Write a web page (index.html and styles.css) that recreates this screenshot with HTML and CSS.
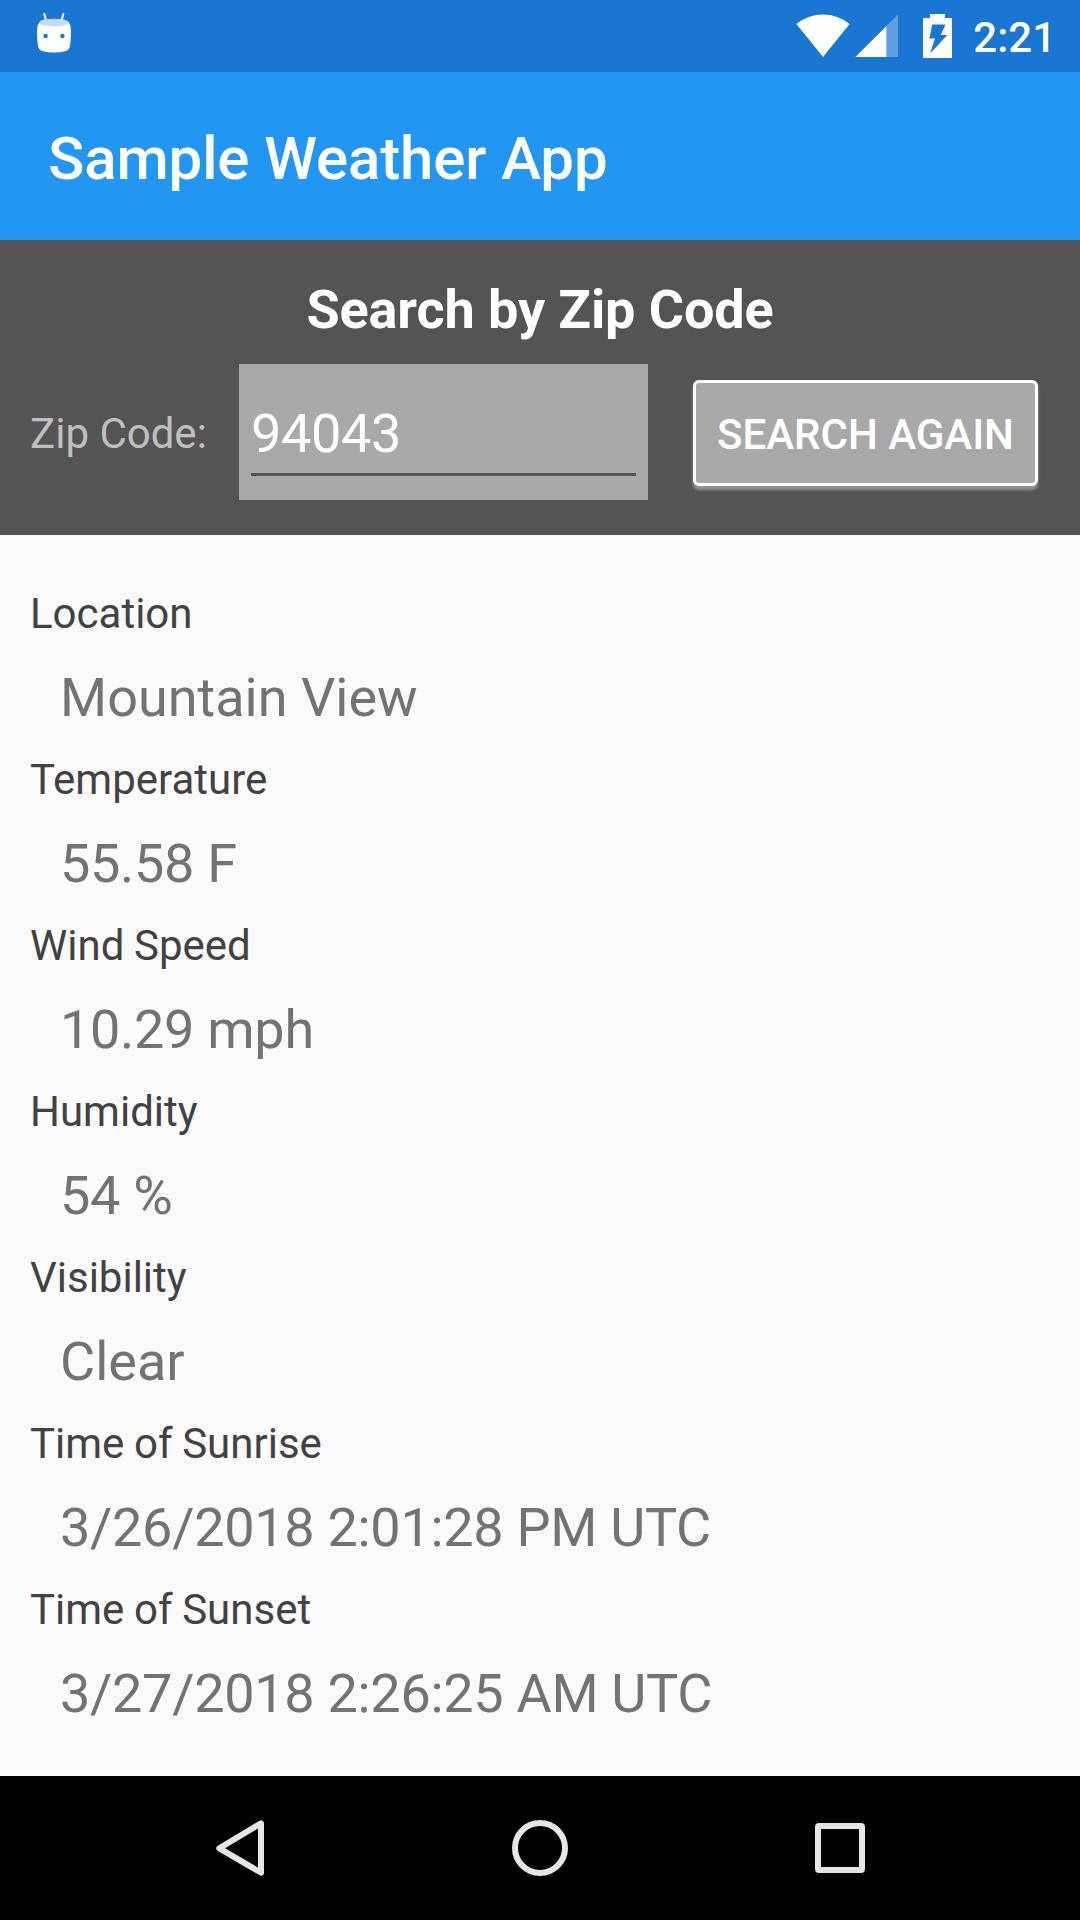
FILE: index.html
```html
<!DOCTYPE html>
<html lang="en">
<head>
<meta charset="utf-8">
<title>Sample Weather App</title>
<link rel="stylesheet" href="styles.css">
</head>
<body>
<div class="screen">
  <div class="status-bar">
    <svg class="robot-icon" width="36" height="42" viewBox="0 0 36 42">
      <path d="M8.3 2L10.4 10M27.3 2L25.2 10" stroke="#fff" stroke-width="2" stroke-linecap="round"/>
      <path d="M3.5 10.5Q18 16 32.5 10.5Q34 11.5 34.5 14Q35.6 24 34 34Q33.3 38 30 39Q18 42.2 6 39Q2.7 38 2 34Q.4 24 1.5 14Q2 11.5 3.5 10.5Z" fill="#fff"/>
      <ellipse cx="18" cy="10.6" rx="14.8" ry="3.9" fill="#c5daf3"/>
      <circle cx="9.6" cy="24" r="2.2" fill="#1976d2"/>
      <circle cx="26.4" cy="24" r="2.2" fill="#1976d2"/>
    </svg>
    <div class="status-right">
      <svg class="wifi-icon" width="54" height="44" viewBox="0 0 54 44">
        <path d="M27 43L.4 10Q12 .5 27 .5T53.6 10Z" fill="#fff"/>
      </svg>
      <svg class="signal-icon" width="43" height="44" viewBox="0 0 43 44">
        <path d="M43 .5V43H.5Z" fill="#fff" opacity=".3"/>
        <path d="M31.3 12.2V43H.5Z" fill="#fff"/>
      </svg>
      <svg class="battery-icon" width="29" height="44" viewBox="0 0 29 44">
        <path fill-rule="evenodd" d="M7 0H22V4H29V44H0V4H7ZM9.3 10.5H22.5L17.8 21H24.4L7 39.5L12 24.5H6.3Z" fill="#fff"/>
      </svg>
      <span class="clock">2:21</span>
    </div>
  </div>

  <header class="app-bar"><h1 class="app-title">Sample Weather App</h1></header>

  <section class="search">
    <h2 class="search-title">Search by Zip Code</h2>
    <div class="search-row">
      <label class="zip-label" for="zip">Zip Code:</label>
      <div class="zip-field"><input class="zip-input" id="zip" type="text" value="94043"></div>
      <button class="search-button">SEARCH AGAIN</button>
    </div>
  </section>

  <dl class="results">
    <dt class="label">Location</dt><dd class="value">Mountain View</dd>
    <dt class="label">Temperature</dt><dd class="value numeric">55.58 F</dd>
    <dt class="label">Wind Speed</dt><dd class="value numeric">10.29 mph</dd>
    <dt class="label">Humidity</dt><dd class="value numeric">54 %</dd>
    <dt class="label">Visibility</dt><dd class="value">Clear</dd>
    <dt class="label">Time of Sunrise</dt><dd class="value numeric">3/26/2018 2:01:28 PM UTC</dd>
    <dt class="label">Time of Sunset</dt><dd class="value numeric">3/27/2018 2:26:25 AM UTC</dd>
  </dl>

  <nav class="nav-bar">
    <div class="nav-item">
      <svg width="60" height="60" viewBox="0 0 60 60"><path d="M51 5.3V54.7L9.3 30.3Z" fill="none" stroke="#e6e6e6" stroke-width="6" stroke-linejoin="round"/></svg>
    </div>
    <div class="nav-item">
      <svg width="60" height="60" viewBox="0 0 60 60"><circle cx="30" cy="30" r="25" fill="none" stroke="#e6e6e6" stroke-width="6"/></svg>
    </div>
    <div class="nav-item">
      <svg width="60" height="60" viewBox="0 0 60 60"><path fill-rule="evenodd" d="M9 5H51Q55 5 55 9V51Q55 55 51 55H9Q5 55 5 51V9Q5 5 9 5ZM11 11V49H49V11Z" fill="#e6e6e6"/></svg>
    </div>
  </nav>
</div>
</body>
</html>
```
FILE: styles.css
```css
* { box-sizing: border-box; }

body {
  margin: 0;
  font-family: Roboto, sans-serif;
  background: #fafafa;
}

svg { display: block; flex: none; }

.screen {
  width: 1080px;
  height: 1920px;
  display: flex;
  flex-direction: column;
}

.status-bar {
  height: 72px;
  padding: 0 24px 0 36px;
  background: #1976d2;
  display: flex;
  justify-content: space-between;
  align-items: flex-start;
}

.robot-icon { margin-top: 12px; }

.status-right {
  display: flex;
  padding-top: 14px;
}

.signal-icon { margin-left: 5px; }
.battery-icon { margin-left: 25px; }

.clock {
  margin-left: 21px;
  color: #fff;
  font-size: 42px;
  font-weight: 500;
  line-height: 48px;
}

.app-bar {
  height: 168px;
  padding: 5px 48px 0;
  background: #2196f3;
  display: flex;
  align-items: center;
}

.app-title {
  margin: 0;
  color: #fff;
  font-size: 60px;
  font-weight: 500;
  line-height: 72px;
  letter-spacing: -0.12px;
}

.search {
  height: 295px;
  padding-top: 34px;
  background: #545454;
}

.search-title {
  margin: 0 0 18px;
  color: #fff;
  font-size: 54px;
  font-weight: 700;
  line-height: 72px;
  letter-spacing: -0.12px;
  text-align: center;
}

.search-row {
  display: flex;
  padding: 0 42px 0 30px;
}

.zip-label {
  width: 209px;
  padding-top: 41px;
  color: #bfbfbf;
  font-size: 42px;
  line-height: 58px;
}

.zip-field {
  width: 409px;
  height: 136px;
  padding: 33px 12px 24px;
  background: #a9a9a9;
}

.zip-input {
  display: block;
  width: 100%;
  height: 79px;
  padding: 0 0 3px;
  border: 0;
  border-bottom: 3px solid #545454;
  border-radius: 0;
  outline: 0;
  background: transparent;
  color: #fff;
  font: 400 54px/72px Roboto, sans-serif;
  letter-spacing: -0.33px;
}

.search-button {
  width: 345px;
  height: 106px;
  margin: 16px 0 0 45px;
  padding: 4px 0 0;
  border: 3px solid #fff;
  border-radius: 6px;
  background: #a9a9a9;
  box-shadow: 0 4px 3px rgba(190, 190, 190, .6);
  color: #fff;
  font: 500 42px/50px Roboto, sans-serif;
}

.results {
  flex: 1;
  margin: 0;
  padding: 50px 30px 0;
}

.label {
  color: #424242;
  font-size: 42px;
  line-height: 58px;
  word-spacing: -0.8px;
}

.value {
  margin: 19px 0 17px 30px;
  color: #737373;
  font-size: 54px;
  line-height: 72px;
}

.numeric { letter-spacing: -0.29px; }

.nav-bar {
  height: 144px;
  padding: 0 90px;
  background: #000;
  display: flex;
}

.nav-item {
  flex: 1;
  display: flex;
  align-items: center;
  justify-content: center;
}
```
